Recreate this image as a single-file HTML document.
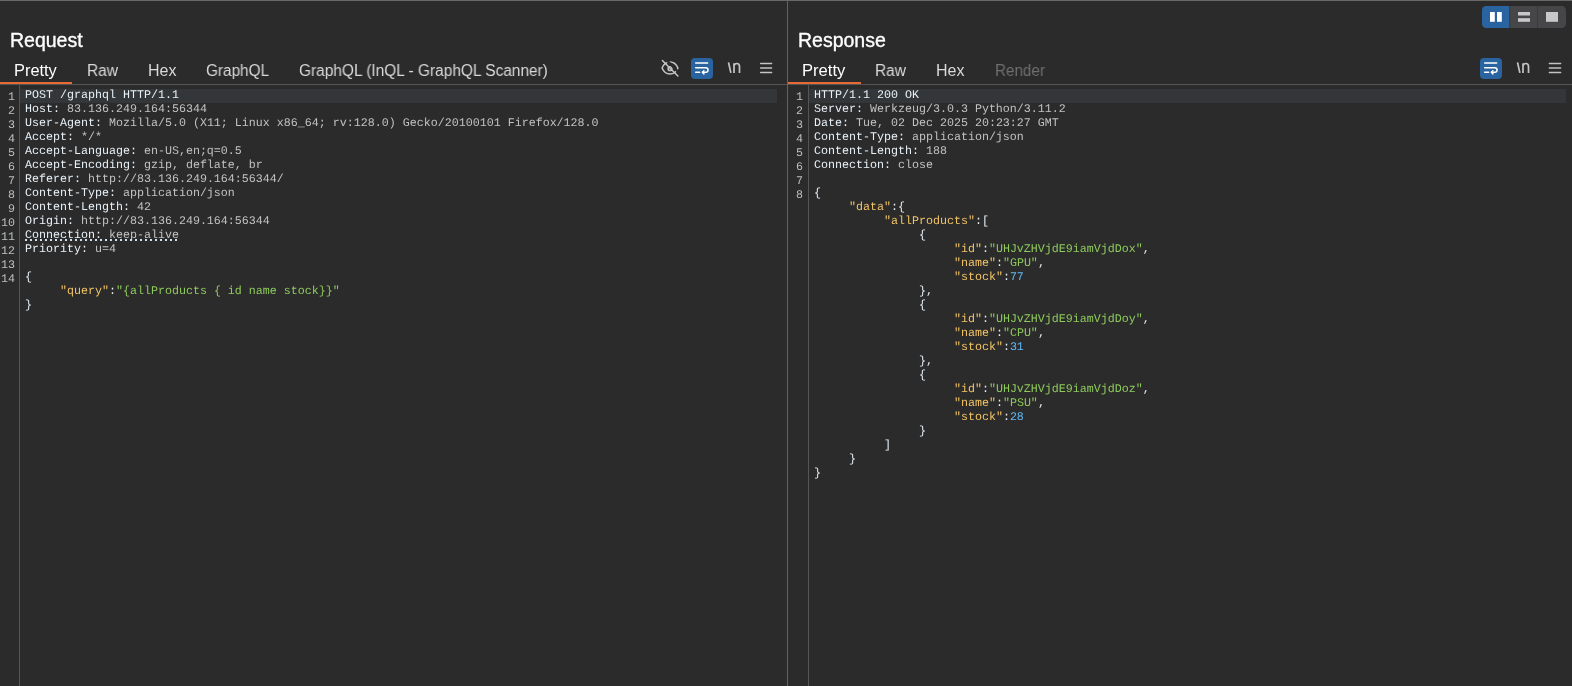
<!DOCTYPE html>
<html><head><meta charset="utf-8">
<style>
html,body{margin:0;padding:0;}
body{width:1572px;height:686px;overflow:hidden;background:#2b2b2b;position:relative;font-family:"Liberation Sans",sans-serif;}
.abs{position:absolute;}
.topline{left:0;top:0;width:1572px;height:1px;background:#676767;}
.vsep{left:787px;top:1px;width:1px;height:685px;background:#636363;}
.title{will-change:transform;top:29px;font-size:19.5px;line-height:normal;color:#ffffff;font-weight:normal;-webkit-text-stroke:0.35px #ffffff;}
.tab{will-change:transform;top:62px;font-size:16px;line-height:normal;color:#d9d9d9;white-space:nowrap;transform-origin:0 0;}
.tab.sel{color:#ffffff;}
.tab.dis{color:#6f6f6f;}
.uline{top:82px;height:2px;background:#e56a35;}
.hline{top:84px;height:1px;background:#555555;}
.gut{top:85px;width:1px;height:601px;background:#555555;}
.hl{top:89px;height:14px;background:#343739;}
.code{will-change:transform;top:88px;font-family:"Liberation Mono",monospace;font-size:11.667px;text-rendering:geometricPrecision;line-height:14px;white-space:pre;color:#c2c2c2;}
.ln{will-change:transform;top:90px;margin-left:-1px;font-family:"Liberation Mono",monospace;font-size:11.667px;text-rendering:geometricPrecision;line-height:14px;white-space:pre;color:#bdbfc1;text-align:right;width:16px;}
.n{color:#e8f1f8;}
.k{color:#f2c466;}
.s{color:#8ecb5c;}
.d{color:#62b9f6;}
.p{color:#e4eef8;}
</style></head><body>
<div class="abs topline"></div>
<div class="abs vsep"></div>

<!-- REQUEST PANEL -->
<div class="abs title" style="left:9.5px;">Request</div>
<div class="abs tab sel" style="left:14.0px;transform:scaleX(1.024);">Pretty</div>
<div class="abs tab" style="left:86.8px;transform:scaleX(0.968);">Raw</div>
<div class="abs tab" style="left:147.7px;transform:scaleX(0.99);">Hex</div>
<div class="abs tab" style="left:205.7px;transform:scaleX(0.958);">GraphQL</div>
<div class="abs tab" style="left:298.5px;transform:scaleX(0.965);">GraphQL (InQL - GraphQL Scanner)</div>
<div class="abs hline" style="left:0;width:787px;"></div>
<div class="abs uline" style="left:0;width:72px;"></div>
<div class="abs gut" style="left:19px;"></div>
<div class="abs hl" style="left:20px;width:757px;"></div>

<div class="abs ln" style="left:0px;">1
2
3
4
5
6
7
8
9
10
11
12
13
14</div>
<div class="abs code" style="left:25px;"><span class="n">POST /graphql HTTP/1.1</span>
<span class="n">Host:</span> 83.136.249.164:56344
<span class="n">User-Agent:</span> Mozilla/5.0 (X11; Linux x86_64; rv:128.0) Gecko/20100101 Firefox/128.0
<span class="n">Accept:</span> */*
<span class="n">Accept-Language:</span> en-US,en;q=0.5
<span class="n">Accept-Encoding:</span> gzip, deflate, br
<span class="n">Referer:</span> http://83.136.249.164:56344/
<span class="n">Content-Type:</span> application/json
<span class="n">Content-Length:</span> 42
<span class="n">Origin:</span> http://83.136.249.164:56344
<span class="n">Connection:</span> keep-alive
<span class="n">Priority:</span> u=4

<span class="p">{</span>
     <span class="k">"query"</span><span class="p">:</span><span class="s">"{allProducts { id name stock}}"</span>
<span class="p">}</span></div>

<!-- RESPONSE PANEL -->
<div class="abs title" style="left:798.3px;">Response</div>
<div class="abs tab sel" style="left:802.3px;transform:scaleX(1.036);">Pretty</div>
<div class="abs tab" style="left:875.4px;transform:scaleX(0.965);">Raw</div>
<div class="abs tab" style="left:936.4px;transform:scaleX(0.99);">Hex</div>
<div class="abs tab dis" style="left:995.2px;transform:scaleX(0.952);">Render</div>
<div class="abs hline" style="left:788px;width:784px;"></div>
<div class="abs uline" style="left:788px;width:73px;"></div>
<div class="abs gut" style="left:808px;"></div>
<div class="abs hl" style="left:809px;width:757px;"></div>

<div class="abs ln" style="left:788px;">1
2
3
4
5
6
7
8</div>
<div class="abs code" style="left:814px;"><span class="n">HTTP/1.1 200 OK</span>
<span class="n">Server:</span> Werkzeug/3.0.3 Python/3.11.2
<span class="n">Date:</span> Tue, 02 Dec 2025 20:23:27 GMT
<span class="n">Content-Type:</span> application/json
<span class="n">Content-Length:</span> 188
<span class="n">Connection:</span> close

<span class="p">{</span>
     <span class="k">"data"</span><span class="p">:{</span>
          <span class="k">"allProducts"</span><span class="p">:[</span>
               <span class="p">{</span>
                    <span class="k">"id"</span><span class="p">:</span><span class="s">"UHJvZHVjdE9iamVjdDox"</span><span class="p">,</span>
                    <span class="k">"name"</span><span class="p">:</span><span class="s">"GPU"</span><span class="p">,</span>
                    <span class="k">"stock"</span><span class="p">:</span><span class="d">77</span>
               <span class="p">},</span>
               <span class="p">{</span>
                    <span class="k">"id"</span><span class="p">:</span><span class="s">"UHJvZHVjdE9iamVjdDoy"</span><span class="p">,</span>
                    <span class="k">"name"</span><span class="p">:</span><span class="s">"CPU"</span><span class="p">,</span>
                    <span class="k">"stock"</span><span class="p">:</span><span class="d">31</span>
               <span class="p">},</span>
               <span class="p">{</span>
                    <span class="k">"id"</span><span class="p">:</span><span class="s">"UHJvZHVjdE9iamVjdDoz"</span><span class="p">,</span>
                    <span class="k">"name"</span><span class="p">:</span><span class="s">"PSU"</span><span class="p">,</span>
                    <span class="k">"stock"</span><span class="p">:</span><span class="d">28</span>
               <span class="p">}</span>
          <span class="p">]</span>
     <span class="p">}</span>
<span class="p">}</span></div>

<svg class="abs" style="left:0;top:0;" width="1572" height="686" viewBox="0 0 1572 686">
<defs>
<clipPath id="grp"><rect x="1482" y="6" width="84" height="22" rx="4.5"/></clipPath>
<mask id="eyemask" maskUnits="userSpaceOnUse" x="650" y="50" width="40" height="35">
<rect x="650" y="50" width="40" height="35" fill="#fff"/>
<line x1="664.3" y1="57.9" x2="680.7" y2="74.3" stroke="#000" stroke-width="2.4"/>
</mask>
</defs>
<!-- layout toggle group -->
<g clip-path="url(#grp)">
<rect x="1482" y="6" width="84" height="22" fill="#464648"/>
<rect x="1482" y="6" width="27.3" height="22" fill="#2a64a0"/>
<rect x="1509.3" y="6" width="0.9" height="22" fill="#3a3a3c"/>
<rect x="1537" y="6" width="0.9" height="22" fill="#3a3a3c"/>
</g>
<rect x="1490" y="12" width="4.8" height="9.8" fill="#ffffff"/>
<rect x="1497" y="12" width="4.8" height="9.8" fill="#ffffff"/>
<rect x="1518" y="12" width="12" height="3.5" fill="#c8c8c8"/>
<rect x="1518" y="18.2" width="12" height="3.6" fill="#c8c8c8"/>
<rect x="1546" y="12" width="12" height="9.8" fill="#c8c8c8"/>

<!-- left eye-off icon -->
<g fill="none" stroke="#c6c6c6" stroke-width="1.5" stroke-linecap="round">
<g mask="url(#eyemask)">
<path d="M662.1 68 C663.9 63.6 666.8 62 670 62 C673.2 62 676.1 63.6 677.9 68 C676.1 72.4 673.2 74 670 74 C666.8 74 663.9 72.4 662.1 68 Z"/>
<circle cx="670" cy="68.7" r="1.9"/>
</g>
<line x1="662.4" y1="60.5" x2="677.9" y2="76"/>
</g>

<!-- wrap buttons -->
<g id="wrapL">
<rect x="691" y="58" width="22" height="21" rx="4" fill="#2a64a0"/>
<g fill="none" stroke="#ffffff" stroke-width="1.5" stroke-linecap="round" stroke-linejoin="round">
<path d="M695.7 62.9 H707.6"/>
<path d="M695.7 67.8 H705.8 A2.2 2.2 0 0 1 705.8 72.3 H702.6"/>
<path d="M695.7 72.3 H699.6"/>
<path d="M703.9 70.7 L702.3 72.3 L703.9 73.9"/>
</g>
</g>
<g>
<rect x="1480" y="58" width="22" height="21" rx="4" fill="#2a64a0"/>
<g fill="none" stroke="#ffffff" stroke-width="1.5" stroke-linecap="round" stroke-linejoin="round">
<path d="M1484.7 62.9 H1496.6"/>
<path d="M1484.7 67.8 H1494.8 A2.2 2.2 0 0 1 1494.8 72.3 H1491.6"/>
<path d="M1484.7 72.3 H1488.6"/>
<path d="M1492.9 70.7 L1491.3 72.3 L1492.9 73.9"/>
</g>
</g>

<!-- \n icons -->
<g fill="none" stroke="#c4c4c4" stroke-width="1.7" stroke-linecap="butt">
<path d="M728.5 62.4 L730.9 72.9"/>
<path d="M734 73 V63.2 M734 66.2 C734.4 64.2 735.6 63.5 736.8 63.5 C738.6 63.5 739.5 64.6 739.5 66.6 V73"/>
<path d="M1517.5 62.4 L1519.9 72.9"/>
<path d="M1523 73 V63.2 M1523 66.2 C1523.4 64.2 1524.6 63.5 1525.8 63.5 C1527.6 63.5 1528.5 64.6 1528.5 66.6 V73"/>
</g>

<!-- hamburger -->
<g stroke="#c4c4c4" stroke-width="1.5" stroke-linecap="round">
<path d="M760.6 63.5 H771.6 M760.6 68 H771.6 M760.6 72.5 H771.6"/>
<path d="M1549.4 63.5 H1560.6 M1549.4 68 H1560.6 M1549.4 72.5 H1560.6"/>
</g>
</svg>
<div class="abs" style="left:25px;top:239px;width:152px;height:2px;background:repeating-linear-gradient(90deg,#cde0f2 0 2px,transparent 2px 5px);"></div>

</body></html>
